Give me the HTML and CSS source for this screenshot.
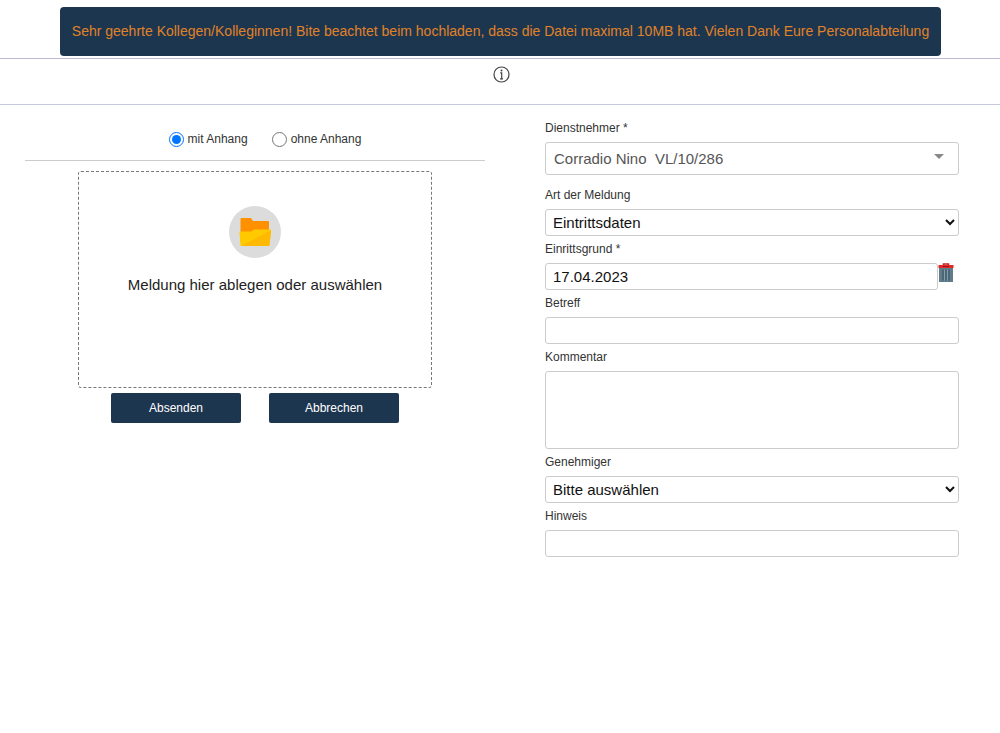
FILE: index.html
```html
<!DOCTYPE html>
<html lang="de">
<head>
    <meta charset="utf-8">
    <meta name="viewport" content="width=device-width, initial-scale=1">
    <title>Meldung</title>
    <link rel="stylesheet" href="styles.css">
</head>
<body>
<div class="notice">Sehr geehrte Kollegen/Kolleginnen! Bite beachtet beim hochladen, dass die Datei maximal 10MB hat. Vielen Dank Eure Personalabteilung</div>

<div class="info-bar">
    <button type="button" class="icon-button" aria-label="Info">
        <svg width="17" height="17" viewBox="0 0 17 17">
            <circle cx="8.5" cy="8.5" r="7.5" fill="none" stroke="#444" stroke-width="1.2"/>
            <circle cx="8.5" cy="4.5" r="1" fill="#444"/>
            <path d="M7.2 6.8h1.500v6M7 12.900h3" fill="none" stroke="#444" stroke-width="1.2"/>
        </svg>
    </button>
</div>

<form class="content">
    <div class="upload">
        <div class="modes">
            <label class="mode"><input type="radio" name="mode" checked>mit Anhang</label>
            <label class="mode"><input type="radio" name="mode">ohne Anhang</label>
        </div>
        <button type="button" class="dropzone">
            <svg width="52" height="52" viewBox="0 0 52 52">
                <circle cx="26" cy="26" r="26" fill="#dcdcdc"/>
                <path d="M11.500 13q0-1 1-1h9.500l2 3h15q1 0 1 1v20H11.500z" fill="#ff9100"/>
                <path d="M10.500 27q-.1-1.500 1-1.500h11l2.500-2h16q1.200 0 1 1.500L40.500 39q-.2 1-1 1h-27q-.8 0-1-1z" fill="#ffca00"/>
                <path d="M42 25L40.500 39q-.2 1-1 1h-27L42 24z" fill="#ffb900"/>
            </svg>
            <span>Meldung hier ablegen oder auswählen</span>
        </button>
        <div class="actions">
            <button type="submit" class="action">Absenden</button>
            <button type="reset" class="action">Abbrechen</button>
        </div>
    </div>

    <div class="fields">
        <label for="employee">Dienstnehmer *</label>
        <div class="combo">
            <select id="employee" class="control">
                <option>Corradio Nino&nbsp; VL/10/286</option>
            </select>
        </div>

        <label for="type">Art der Meldung</label>
        <select id="type" class="control">
            <option>Eintrittsdaten</option>
        </select>

        <label for="date">Einrittsgrund *</label>
        <div class="date-row">
            <input id="date" class="control" type="text" value="17.04.2023">
            <button type="button" class="icon-button" aria-label="Datum löschen">
                <svg width="16" height="20" viewBox="0 0 16 20">
                    <path d="M5.500 2V1h5v1" fill="none" stroke="#c41c1c" stroke-width="1.500"/>
                    <path d="M1 5h14v14H1z" fill="#607d8b"/>
                    <path d="M5 6.500v11M8 6.500v11M11 6.500v11" stroke="#38505c" stroke-width="1"/>
                    <path d="M6.500 6.500v11M9.500 6.500v11" stroke="#82a0ae" stroke-width="1"/>
                    <path d="M.5 2h15v3H.5z" fill="#e02828"/>
                    <path d="M5 3h6v1H5z" fill="#9c1616"/>
                </svg>
            </button>
        </div>

        <label for="subject">Betreff</label>
        <input id="subject" class="control" type="text">

        <label for="comment">Kommentar</label>
        <textarea id="comment" class="control"></textarea>

        <label for="approver">Genehmiger</label>
        <select id="approver" class="control">
            <option>Bitte auswählen</option>
        </select>

        <label for="hint">Hinweis</label>
        <input id="hint" class="control" type="text">
    </div>
</form>
</body>
</html>
```

FILE: styles.css
```css
* {
    box-sizing: border-box;
}

body {
    margin: 0;
    background: #fff;
    color: #333;
    font-family: "Liberation Sans", Arial, sans-serif;
    font-size: 12px;
}

button,
input,
select,
textarea {
    font-family: inherit;
}

.notice {
    margin: 7px 59px 2px 60px;
    padding: 16px 8px;
    border-radius: 4px;
    background: #1d3650;
    color: #e08227;
    font-size: 14px;
    line-height: 17px;
    text-align: center;
}

.info-bar {
    display: flex;
    justify-content: center;
    height: 47px;
    padding: 7px 0 0 2px;
    border-top: 1px solid #b9bad2;
    border-bottom: 1px solid #c6c8dc;
}

.icon-button {
    display: flex;
    align-self: flex-start;
    padding: 0;
    border: 0;
    background: none;
    cursor: pointer;
}

.content {
    display: grid;
    grid-template-columns: 10fr 9fr;
    gap: 60px;
    padding: 10px 41px 0 25px;
}

.upload {
    display: flex;
    flex-direction: column;
    align-items: center;
}

.modes {
    display: flex;
    justify-content: center;
    gap: 24px;
    width: 100%;
    margin-bottom: 10px;
    padding: 16px 0 13px 20px;
    border-bottom: 1px solid #ccc;
}

.mode {
    display: flex;
    align-items: center;
    gap: 4px;
    line-height: 16px;
}

.mode input {
    width: 15px;
    height: 15px;
    margin: 0;
}

.dropzone {
    display: flex;
    flex-direction: column;
    align-items: center;
    gap: 18px;
    width: 77%;
    height: 217px;
    padding: 34px 0 0;
    border: 1px dashed #777;
    border-radius: 3px;
    background: #fff;
    color: #222;
    font-size: 15px;
    cursor: pointer;
}

.actions {
    display: flex;
    gap: 28px;
    margin-top: 5px;
}

.action {
    width: 130px;
    height: 30px;
    border: 0;
    border-radius: 2px;
    background: #1d3650;
    color: #fff;
    font-size: 12px;
    cursor: pointer;
}

.fields {
    display: flex;
    flex-direction: column;
}

.fields label {
    line-height: 27px;
}

.control {
    width: 100%;
    height: 27px;
    padding: 0 7px;
    border: 1px solid #ccc;
    border-radius: 3px;
    background: #fff;
    color: #111;
    font-size: 15px;
}

select.control {
    padding: 0 3px;
}

textarea.control {
    height: 78px;
    resize: none;
}

.combo {
    position: relative;
    margin-bottom: 7px;
}

.combo .control {
    display: block;
    height: 33px;
    padding: 0 8px;
    appearance: none;
    color: #555;
}

/* dropdown arrow */
.combo::after {
    content: "";
    position: absolute;
    top: 12px;
    right: 15px;
    border: 5px solid transparent;
    border-top-color: #888;
    border-bottom: 0;
    pointer-events: none;
}

.date-row {
    display: flex;
    padding-right: 5px;
}
```
